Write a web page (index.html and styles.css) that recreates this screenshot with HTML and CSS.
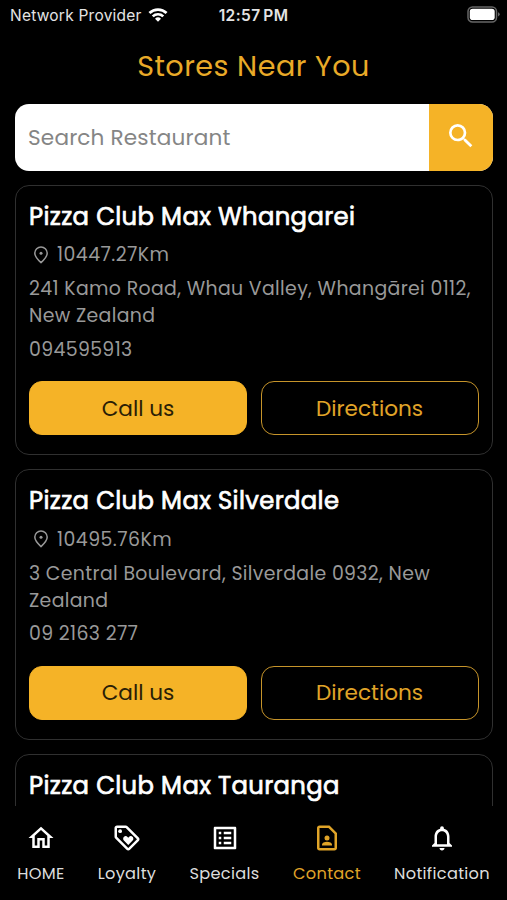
FILE: index.html
```html
<!DOCTYPE html>
<html lang="en">
<head>
<meta charset="utf-8">
<title>Stores Near You</title>
<link rel="stylesheet" href="styles.css">
</head>
<body>
<div class="app">
  <header class="status">
    <div class="carrier"><span class="carrier-name">Network Provider</span>
      <svg class="wifi" viewBox="0 0 20 15"><path d="M0.5 5.1a13.7 13.7 0 0 1 19 0l-1.9 1.9a11 11 0 0 0-15.2 0zM3.8 8.4a9 9 0 0 1 12.4 0l-1.9 1.9a6.3 6.3 0 0 0-8.6 0zM7 11.7a4.3 4.3 0 0 1 6 0L10 14.8z"/></svg>
    </div>
    <div class="clock">12:57 PM</div>
    <svg class="battery" viewBox="0 0 33 17"><rect class="shell" x="1" y="1" width="28.5" height="15" rx="4.5"/><rect x="2.8" y="2.8" width="24.9" height="11.2" rx="2.8"/><path class="tip" d="M31 6.2q1.7.6 1.7 2.1t-1.7 2.1z"/></svg>
  </header>
  <h1 class="title"><span>Stores Near You</span></h1>
  <div class="search">
    <div class="search-field"><span>Search Restaurant</span></div>
    <div class="search-button"><svg viewBox="0 0 24 24"><path d="M15.5 14h-.79l-.28-.27A6.47 6.47 0 0 0 16 9.5 6.5 6.5 0 1 0 9.5 16c1.61 0 3.09-.59 4.23-1.57l.27.28v.79l5 4.99L20.49 19zm-6 0a4.5 4.5 0 1 1 0-9 4.5 4.5 0 0 1 0 9z"/></svg></div>
  </div>
  <main class="stores">
    <article class="card">
      <h2 class="name"><span>Pizza Club Max Whangarei</span></h2>
      <div class="distance"><svg viewBox="0 0 16 20"><path d="M8 2A6.2 6.2 0 0 0 1.800 8.100C1.800 11.800 6 15.800 8 17.600 10 15.800 14.200 11.800 14.200 8.100A6.200 6.200 0 0 0 8 2z"/><circle cx="8" cy="8.200" r="1.500"/></svg><span>10447.27Km</span></div>
      <p class="address"><span>241 Kamo Road, Whau Valley, Whangārei 0112,</span><br><span>New Zealand</span></p>
      <p class="phone"><span>094595913</span></p>
      <div class="actions"><div class="button call"><span>Call us</span></div><div class="button directions"><span>Directions</span></div></div>
    </article>
    <article class="card">
      <h2 class="name"><span>Pizza Club Max Silverdale</span></h2>
      <div class="distance"><svg viewBox="0 0 16 20"><path d="M8 2A6.2 6.2 0 0 0 1.800 8.100C1.800 11.800 6 15.800 8 17.600 10 15.800 14.200 11.800 14.200 8.100A6.200 6.200 0 0 0 8 2z"/><circle cx="8" cy="8.200" r="1.500"/></svg><span>10495.76Km</span></div>
      <p class="address"><span>3 Central Boulevard, Silverdale 0932, New</span><br><span>Zealand</span></p>
      <p class="phone"><span>09 2163 277</span></p>
      <div class="actions"><div class="button call"><span>Call us</span></div><div class="button directions"><span>Directions</span></div></div>
    </article>
    <article class="card">
      <h2 class="name"><span>Pizza Club Max Tauranga</span></h2>
    </article>
  </main>
  <nav class="tabs">
    <div class="tab home"><svg viewBox="0 0 24 24"><path d="m12 5.690 5 4.500V18h-2v-6H9v6H7v-7.810zM12 3 2 12h3v8h6v-6h2v6h6v-8h3z"/></svg><span>HOME</span></div>
    <div class="tab loyalty"><svg viewBox="0 0 24 24"><path d="m21.410 11.580-9-9C12.050 2.220 11.550 2 11 2H4c-1.100 0-2 .9-2 2v7c0 .55.22 1.050.59 1.420l9 9c.36.36.86.58 1.410.58s1.050-.22 1.410-.59l7-7c.37-.36.59-.86.59-1.410s-.23-1.060-.59-1.420zM13 20.010 4 11V4h7v-.01l9 9z"/><circle cx="6.500" cy="6.500" r="1.500"/><path d="M8.900 12.550c0 .57.23 1.070.6 1.450l3.500 3.500 3.500-3.500c.37-.37.6-.89.6-1.450a2.050 2.050 0 0 0-3.500-1.450l-.6.600-.6-.590a2.050 2.050 0 0 0-3.500 1.440z"/></svg><span>Loyalty</span></div>
    <div class="tab specials"><svg viewBox="0 0 24 24"><path d="M11 7h6v2h-6zm0 4h6v2h-6zm0 4h6v2h-6zM7 7h2v2H7zm0 4h2v2H7zm0 4h2v2H7zM20.100 3H3.900c-.5 0-.9.4-.9.9v16.200c0 .4.400.9.900.9h16.200c.4 0 .9-.5.900-.9V3.900c0-.5-.5-.9-.9-.9zM19 19H5V5h14z"/></svg><span>Specials</span></div>
    <div class="tab contact"><svg viewBox="0 0 24 24"><path d="M13.170 4 18 8.830V20H6V4zM14 2H6c-1.100 0-2 .9-2 2v16c0 1.100.9 2 2 2h12c1.100 0 2-.9 2-2V8z"/><circle cx="12" cy="12" r="2"/><path d="M16 17.430c0-.81-.48-1.530-1.220-1.850a6.950 6.950 0 0 0-5.560 0A2.010 2.010 0 0 0 8 17.430V18h8z"/></svg><span>Contact</span></div>
    <div class="tab notification"><svg viewBox="0 0 24 24"><path d="M12 22c1.100 0 2-.9 2-2h-4c0 1.100.9 2 2 2zm6-6v-5c0-3.070-1.630-5.640-4.500-6.320V4a1.500 1.500 0 0 0-3 0v.68C7.640 5.360 6 7.920 6 11v5l-2 2v1h16v-1zm-2 1H8v-6c0-2.480 1.510-4.500 4-4.500s4 2.020 4 4.500z"/></svg><span>Notification</span></div>
  </nav>
</div>
</body>
</html>
```

FILE: styles.css
```css
* { box-sizing: border-box; }
body { margin: 0; background: #000; }
.app {
  display: flex; flex-direction: column;
  width: 507px; height: 900px; overflow: hidden;
  background: #000; color: #fff;
  font-family: Poppins, Inter, sans-serif;
  font-weight: 400;
}
h1, h2, p { margin: 0; font-weight: 400; }
svg { display: block; fill: currentColor; flex: none; }
span { white-space: nowrap; }

.status {
  display: grid; grid-template-columns: 1fr auto 1fr; align-items: center;
  height: 30px; padding: 0 7px 0 10px;
  font-family: Inter, sans-serif; color: #e4e4e4;
}
.carrier { display: flex; align-items: center; gap: 6px; font-size: 15.500px; letter-spacing: .23px; }
.wifi { width: 20px; height: 15px; color: #fff; margin-top: -2px; }
.clock { font-size: 15.500px; font-weight: 600; letter-spacing: .4px; word-spacing: -1.500px; margin-left: -3px; }
.battery { width: 33px; height: 17px; justify-self: end; color: #fff; margin-top: -2px; }
.shell { fill: none; stroke: #666; stroke-width: 1.500; }
.tip { fill: #666; }

.title { height: 73.500px; line-height: 73px; text-align: center; font-size: 28.600px; color: #e9aa28; letter-spacing: .5px; }

.search { display: flex; flex: none; height: 67.500px; margin: 0 14px 0 14.500px; border-radius: 14px; overflow: hidden; background: #fff; }
.search-field { flex: 1; padding-left: 13.500px; line-height: 68px; font-size: 21.600px; color: #858585; letter-spacing: .16px; }
.search-button { display: grid; place-items: center; width: 64.500px; background: #f5b327; }
.search-button svg { width: 32px; height: 32px; margin-top: -2px; }

.stores { flex: 1; min-height: 0; display: flex; flex-direction: column; gap: 14px; padding: 13.500px 14px 0 14.500px; overflow: hidden; }
.card { flex: none; height: 270.500px; padding: 16px 13.500px 0; border: 1px solid #303030; border-radius: 14px; }
.name { height: 30px; line-height: 30px; font-size: 24.300px; -webkit-text-stroke: .7px #fff; letter-spacing: .35px; }
.distance { display: flex; align-items: center; gap: 8px; margin-top: 9.500px; padding-left: 4px; height: 27px; font-size: 18.900px; color: #999; }
.distance svg { width: 16px; height: 20px; fill: none; stroke: currentColor; stroke-width: 1.500; }
.distance circle { fill: currentColor; stroke: none; }
.address, .phone { line-height: 27px; font-size: 18.900px; color: #999; }
.distance, .address, .phone { letter-spacing: .35px; }
.distance span { letter-spacing: .45px; }
.address { margin-top: 7px; }
.phone { margin-top: 6.500px; }
.actions { display: grid; grid-template-columns: 1fr 1fr; gap: 13.500px; margin-top: 18.500px; }
.button { display: grid; place-items: center; height: 54px; border: 1.500px solid #f5b327; border-radius: 13px; font-size: 21.600px; line-height: 31px; }
.call { background: #f5b327; color: #2a1e06; }
.directions { color: #e0a428; border-color: #c6942a; }

.tabs { display: grid; grid-template-columns: 82px 90px 105px 100px 130px; flex: none; height: 94px; }
.tab { display: flex; flex-direction: column; align-items: center; padding-top: 17px; gap: 11px; font-size: 16.200px; line-height: 20px; color: #ddd; letter-spacing: .3px; }
.tab svg { width: 30px; height: 30px; color: #fff; }
.tab.contact, .contact svg { color: #e0a428; }
```
